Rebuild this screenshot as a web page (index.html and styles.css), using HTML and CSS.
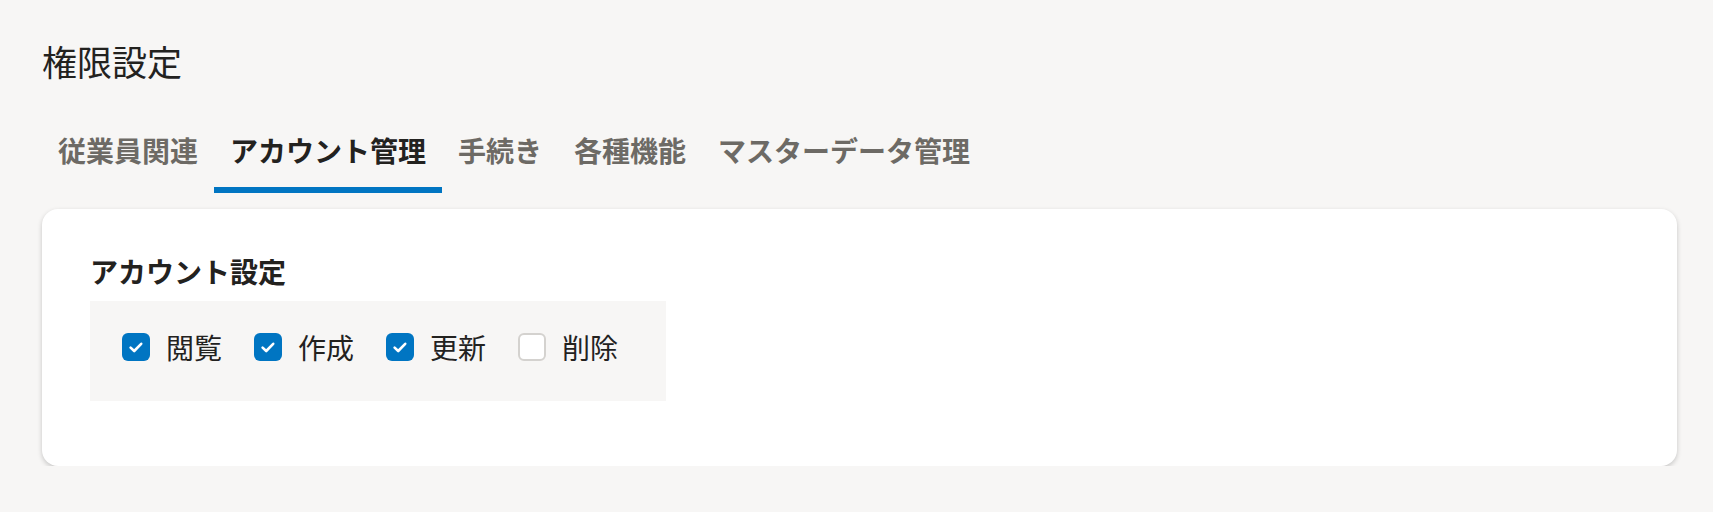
FILE: index.html
```html
<!DOCTYPE html>
<html lang="ja">
<head>
<meta charset="utf-8">
<title>権限設定</title>
<link rel="stylesheet" href="styles.css">
</head>
<body>
<div class="page">
  <h1 class="title">権限設定</h1>
  <nav class="tabs">
    <a class="tab">従業員関連</a>
    <a class="tab active">アカウント管理</a>
    <a class="tab">手続き</a>
    <a class="tab">各種機能</a>
    <a class="tab">マスターデータ管理</a>
  </nav>
  <section class="card">
    <h2 class="section-title">アカウント設定</h2>
    <div class="perm-box">
      <label class="perm">
        <span class="cb checked"><svg viewBox="0 0 28 28" width="28" height="28"><path d="M8.6 14.6 L12.2 18 L19.2 10.8" fill="none" stroke="#fff" stroke-width="2.6" stroke-linecap="round" stroke-linejoin="round"/></svg></span>
        <span class="perm-label">閲覧</span>
      </label>
      <label class="perm">
        <span class="cb checked"><svg viewBox="0 0 28 28" width="28" height="28"><path d="M8.6 14.6 L12.2 18 L19.2 10.8" fill="none" stroke="#fff" stroke-width="2.6" stroke-linecap="round" stroke-linejoin="round"/></svg></span>
        <span class="perm-label">作成</span>
      </label>
      <label class="perm">
        <span class="cb checked"><svg viewBox="0 0 28 28" width="28" height="28"><path d="M8.6 14.6 L12.2 18 L19.2 10.8" fill="none" stroke="#fff" stroke-width="2.6" stroke-linecap="round" stroke-linejoin="round"/></svg></span>
        <span class="perm-label">更新</span>
      </label>
      <label class="perm">
        <span class="cb unchecked"></span>
        <span class="perm-label">削除</span>
      </label>
    </div>
  </section>
</div>
</body>
</html>
```

FILE: styles.css
```css
html, body {
  margin: 0;
  padding: 0;
}
body {
  background: #f7f6f5;
  font-family: "Noto Sans CJK JP", "Noto Sans", sans-serif;
  color: #23221f;
}
.page {
  padding: 35px 36px 0 42px;
}
.title {
  margin: 0;
  font-size: 35px;
  font-weight: 400;
  line-height: 52px;
  color: #23221f;
}
.tabs {
  display: flex;
  margin-top: 42px;
}
.tab {
  padding: 0 16px 16px;
  font-size: 28px;
  font-weight: 700;
  line-height: 42px;
  color: #6d6a65;
  border-bottom: 6px solid transparent;
  cursor: pointer;
}
.tab.active {
  color: #23221f;
  border-bottom-color: #0075c2;
}
.card {
  margin-top: 16px;
  background: #fff;
  border-radius: 16px;
  padding: 48px 48px 65px;
  box-shadow: 0 2px 5px rgba(0, 0, 0, 0.2);
}
.section-title {
  margin: 0 0 16px;
  font-size: 28px;
  font-weight: 700;
  line-height: 28px;
  color: #23221f;
}
.perm-box {
  display: flex;
  width: fit-content;
  gap: 32px;
  padding: 32px 48px 40px 32px;
  background: #f7f6f5;
}
.perm {
  display: flex;
  align-items: center;
  gap: 16px;
  font-size: 28px;
  line-height: 28px;
  color: #23221f;
}
.cb {
  box-sizing: border-box;
  width: 28px;
  height: 28px;
  border-radius: 6px;
  display: flex;
}
.cb.checked {
  background: #0075c2;
}
.cb.unchecked {
  background: #fff;
  border: 2px solid #d4d2cf;
}
```
